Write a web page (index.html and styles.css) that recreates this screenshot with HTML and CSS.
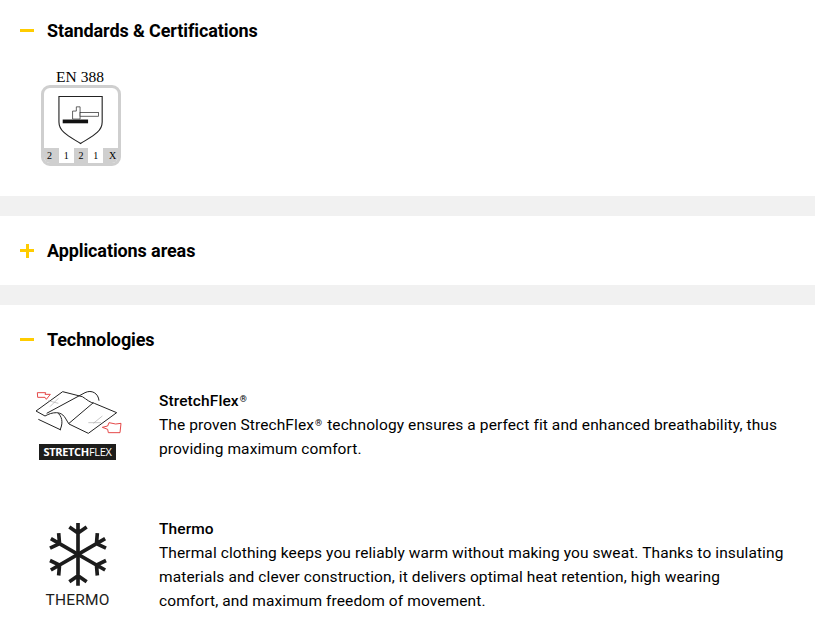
FILE: index.html
```html
<!DOCTYPE html>
<html>
<head>
  <meta charset="UTF-8">
  <title>Product details</title>
  <link rel="stylesheet" href="styles.css">
</head>
<body>
  <section class="panel panel-first">
    <h2 class="panel-head"><span class="toggle"></span>Standards &amp; Certifications</h2>
    <div class="norm">
      <div class="norm-name">EN 388</div>
      <div class="norm-badge">
        <svg class="norm-shield" viewBox="0 0 50 52">
          <path d="M1 1H47V28C47 39 35 44 24 51C13 44 1 39 1 28Z" fill="#fff" stroke="#222" stroke-width="1.2"/>
          <rect x="5" y="25.5" width="27" height="4" fill="#111"/>
          <path d="M15.5 25V16.5H19.5V12H23.5V25Z" fill="#fff" stroke="#333" stroke-width="0.8"/>
          <rect x="23.5" y="18" width="19.5" height="4" fill="#fff" stroke="#333" stroke-width="0.8"/>
        </svg>
        <div class="norm-scores">
          <span>2</span>
          <span class="score-light">1</span>
          <span>2</span>
          <span class="score-light">1</span>
          <span>X</span>
        </div>
      </div>
    </div>
  </section>

  <section class="panel">
    <h2 class="panel-head"><span class="toggle toggle-plus"></span>Applications areas</h2>
  </section>

  <section class="panel panel-last">
    <h2 class="panel-head"><span class="toggle"></span>Technologies</h2>

    <div class="tech">
      <div class="tech-icon">
        <svg class="stretch-art" viewBox="0 24 315 165">
          <g fill="none" stroke="#222" stroke-width="3">
            <path d="M33 93L113 35L172 50C185 58 195 68 208 70L275 98L190 160L132 132C120 115 118 100 95 98C80 98 72 102 60 108Z" fill="#fff"/>
            <path d="M65 100L180 38"/>
            <path d="M132 130L205 68"/>
            <path d="M180 38C200 28 220 40 222 62"/>
            <path d="M40 118L108 150"/>
            <path d="M100 100C115 115 112 135 105 150"/>
          </g>
          <g fill="none" stroke="#aaa" stroke-width="2">
            <path d="M70 62L100 70M75 80L100 55M205 130L232 108M190 128L228 128"/>
          </g>
          <g fill="none" stroke="#e23b3b" stroke-width="2.8">
            <path d="M37 38H62L60 43H76L64 58L60 52H38Z"/>
            <path d="M232 142L248 138L252 128L272 132L288 130L285 158H250L248 148Z"/>
          </g>
        </svg>
        <div class="stretch-label"><b>STRETCH</b>FLEX</div>
      </div>
      <div class="tech-text">
        <h3 class="tech-title">StretchFlex<span class="reg">®</span></h3>
        <p>The proven StrechFlex<span class="reg">®</span> technology ensures a perfect fit and enhanced breathability, thus<br>providing maximum comfort.</p>
      </div>
    </div>

    <div class="tech">
      <div class="tech-icon">
        <svg class="thermo-art" viewBox="-8 3 270 213">
          <defs>
            <g id="arm">
              <path d="M127 118V24M101 36L127 54L153 36" fill="none" stroke="#1c1c1c" stroke-width="11"/>
            </g>
          </defs>
          <use href="#arm"/>
          <use href="#arm" transform="rotate(60 127 118)"/>
          <use href="#arm" transform="rotate(120 127 118)"/>
          <use href="#arm" transform="rotate(180 127 118)"/>
          <use href="#arm" transform="rotate(240 127 118)"/>
          <use href="#arm" transform="rotate(300 127 118)"/>
        </svg>
        <div class="thermo-label">THERMO</div>
      </div>
      <div class="tech-text">
        <h3 class="tech-title">Thermo</h3>
        <p>Thermal clothing keeps you reliably warm without making you sweat. Thanks to insulating<br>materials and clever construction, it delivers optimal heat retention, high wearing<br>comfort, and maximum freedom of movement.</p>
      </div>
    </div>
  </section>
</body>
</html>
```

FILE: styles.css
```css
/* Reset some default styles */
body, html {
  margin: 0;
  padding: 0;
  font-family: Roboto, Arial, sans-serif;
  background-color: #f1f1f1;
  color: #000;
}

/* Accordion panels */
.panel {
  background-color: #fff;
  margin-bottom: 20px;
}

.panel-first {
  padding-bottom: 30px;
}

.panel-last {
  margin-bottom: 0;
  padding-bottom: 21px;
}

.panel-head {
  display: flex;
  align-items: center;
  margin: 0;
  padding: 22px 20px;
  font-size: 18px;
  line-height: 25px;
  font-weight: 700;
  letter-spacing: -0.1px;
}

.panel-first .panel-head {
  padding: 18px 20px 22px;
}

/* Yellow plus and minus */
.toggle {
  position: relative;
  flex: none;
  width: 14px;
  height: 3px;
  margin-right: 13px;
  background-color: #ffcc00;
}

.toggle-plus::after {
  content: "";
  position: absolute;
  left: 5.5px;
  top: -5.5px;
  width: 3px;
  height: 14px;
  background-color: #ffcc00;
}

/* EN 388 block */
.norm {
  width: 80px;
  margin: 4px 0 0 41px;
}

.norm-name {
  font-family: "Liberation Serif", serif;
  font-size: 15.5px;
  line-height: 16px;
  text-align: center;
  padding-right: 2px;
}

.norm-badge {
  box-sizing: border-box;
  height: 81px;
  border: 3px solid #cfcfcf;
  border-radius: 9px;
  overflow: hidden;
  display: flex;
  flex-direction: column;
  align-items: center;
}

.norm-shield {
  width: 47px;
  height: 50px;
  margin: 7px 0 0;
  overflow: visible;
}

.norm-scores {
  display: flex;
  align-self: stretch;
  margin-top: auto;
  height: 15px;
  background-color: #cfcfcf;
  font-family: "Liberation Serif", serif;
  font-size: 10px;
  line-height: 15px;
  text-align: center;
}

.norm-scores span {
  flex: 1;
}

.norm-scores span:first-child {
  text-indent: -4px;
}

.norm-scores span:last-child {
  text-indent: 4px;
}

.norm-scores .score-light {
  background-color: #fff;
}

/* Technology rows */
.tech {
  display: flex;
  gap: 24px;
  padding: 14px 20px 41px;
}

.tech:last-child {
  padding-bottom: 0;
}

.tech-icon {
  flex: none;
  width: 115px;
  display: flex;
  flex-direction: column;
  align-items: center;
}

.stretch-art {
  display: block;
  width: 105px;
  height: 55px;
}

.stretch-label {
  width: 77px;
  height: 16px;
  margin-top: 1px;
  background-color: #1d1d1b;
  color: #fff;
  font-family: "Open Sans", sans-serif;
  font-size: 11px;
  line-height: 16px;
  text-align: center;
  letter-spacing: -0.3px;
}

.thermo-art {
  display: block;
  width: 90px;
  height: 71px;
}

.thermo-label {
  margin-top: 3px;
  font-size: 15.5px;
  line-height: 20px;
  letter-spacing: 0.2px;
  color: #1d1d1b;
}

.tech-text {
  flex: 1;
  padding-top: 1px;
  font-size: 15.5px;
  line-height: 24px;
  letter-spacing: 0.1px;
}

.tech-title {
  margin: 0;
  font-size: 15.5px;
  line-height: 24px;
  font-weight: 500;
}

.tech-text p {
  margin: 0;
}

.reg {
  margin: 0 1px;
  font-size: 9px;
  line-height: 1;
  vertical-align: 4px;
}
```
